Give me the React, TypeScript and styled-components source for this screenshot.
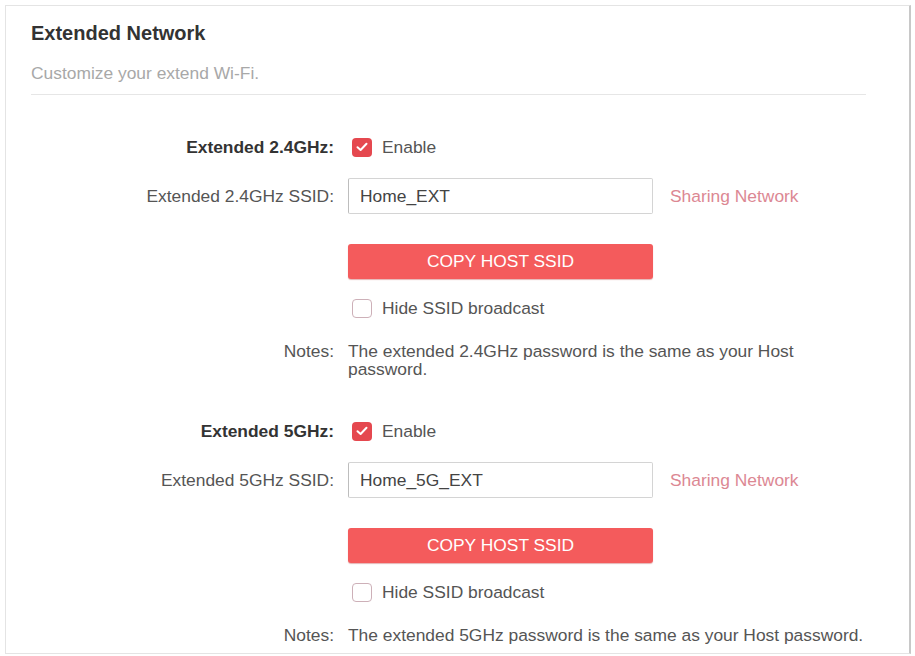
import React from "react";
import styled, { createGlobalStyle } from "styled-components";

const Global = createGlobalStyle`
  html, body { margin: 0; padding: 0; background: #fff; }
  body { font-family: "Liberation Sans", Arial, sans-serif; }
  * { box-sizing: border-box; }
`;

const Frame = styled.div`
  margin: 5px 0 0 5px;
  width: 906px;
  height: 649px;
  border: 1px solid #e4e4e4;
  border-right: 2px solid #c8c8c8;
  overflow: hidden;
  padding: 15px 0 0 25px;
  background: #fff;
`;

const Title = styled.h1`
  margin: 0;
  font-size: 20px;
  line-height: 24px;
  font-weight: bold;
  color: #333;
`;

const Subtitle = styled.p`
  margin: 18px 0 0;
  font-size: 17.4px;
  line-height: 20px;
  color: #a8a8a8;
`;

const Divider = styled.hr`
  margin: 11px 0 0;
  width: 835px;
  border: none;
  border-top: 1px solid #e6e6e6;
`;

const Row = styled.div<{ $top: number; $h: number }>`
  display: flex;
  align-items: ${(p) => (p.$h > 0 ? "center" : "flex-start")};
  margin-top: ${(p) => p.$top}px;
  min-height: ${(p) => p.$h}px;
`;

const Label = styled.div<{ $bold?: boolean }>`
  width: 303px;
  margin-right: 14px;
  flex: none;
  text-align: right;
  font-size: 17.4px;
  line-height: 18px;
  font-weight: ${(p) => (p.$bold ? "bold" : "normal")};
  color: ${(p) => (p.$bold ? "#333" : "#555")};
`;

const CheckWrap = styled.label`
  display: flex;
  align-items: center;
  gap: 10px;
  padding-left: 4px;
  font-size: 17.4px;
  line-height: 20px;
  color: #555;
`;

const Box = styled.span<{ $on?: boolean }>`
  width: 20px;
  height: 19px;
  border-radius: 4px;
  display: inline-flex;
  align-items: center;
  justify-content: center;
  background: ${(p) => (p.$on ? "#e5484f" : "#fff")};
  border: ${(p) => (p.$on ? "none" : "1.5px solid #cdb0b8")};
`;

const Input = styled.input`
  width: 305px;
  height: 36px;
  border: 1px solid #d4d4d4;
  border-left-color: #bdbdbd;
  border-radius: 2px;
  padding: 0 11px;
  font-family: "Liberation Sans", Arial, sans-serif;
  font-size: 17.4px;
  color: #444;
  outline: none;
`;

const Sharing = styled.span`
  margin-left: 17px;
  font-size: 17.4px;
  color: #dc8893;
`;

const Button = styled.button`
  width: 305px;
  height: 35px;
  border: none;
  border-radius: 3px;
  background: #f45b5c;
  color: #fff;
  font-family: "Liberation Sans", Arial, sans-serif;
  font-size: 17.4px;
  text-transform: uppercase;
  box-shadow: 0 1px 1px rgba(180, 40, 40, 0.35);
  cursor: pointer;
`;

const Note = styled.div`
  max-width: 522px;
  font-size: 17.4px;
  line-height: 18px;
  color: #555;
`;

const Spacer = styled.div`
  width: 303px;
  margin-right: 14px;
  flex: none;
`;

const Check = () => (
  <svg width="12" height="10" viewBox="0 0 12 10">
    <path d="M1.5 5.2 L4.6 8 L10.5 1.8" fill="none" stroke="#fff" strokeWidth="2" strokeLinecap="round" strokeLinejoin="round" />
  </svg>
);

type BandProps = { band: string; ssid: string; note: string; first?: boolean };

const Band = ({ band, ssid, note, first }: BandProps) => (
  <>
    <Row $top={first ? 40 : 41} $h={24}>
      <Label $bold>Extended {band}:</Label>
      <CheckWrap>
        <Box $on>
          <Check />
        </Box>
        Enable
      </CheckWrap>
    </Row>
    <Row $top={19} $h={36}>
      <Label>Extended {band} SSID:</Label>
      <Input defaultValue={ssid} />
      <Sharing>Sharing Network</Sharing>
    </Row>
    <Row $top={30} $h={35}>
      <Spacer />
      <Button>Copy Host SSID</Button>
    </Row>
    <Row $top={17} $h={24}>
      <Spacer />
      <CheckWrap>
        <Box />
        Hide SSID broadcast
      </CheckWrap>
    </Row>
    <Row $top={22} $h={0}>
      <Label>Notes:</Label>
      <Note>{note}</Note>
    </Row>
  </>
);

export default function App() {
  return (
    <>
      <Global />
      <Frame>
        <Title>Extended Network</Title>
        <Subtitle>Customize your extend Wi-Fi.</Subtitle>
        <Divider />
        <Band
          first
          band="2.4GHz"
          ssid="Home_EXT"
          note="The extended 2.4GHz password is the same as your Host password."
        />
        <Band
          band="5GHz"
          ssid="Home_5G_EXT"
          note="The extended 5GHz password is the same as your Host password."
        />
      </Frame>
    </>
  );
}
